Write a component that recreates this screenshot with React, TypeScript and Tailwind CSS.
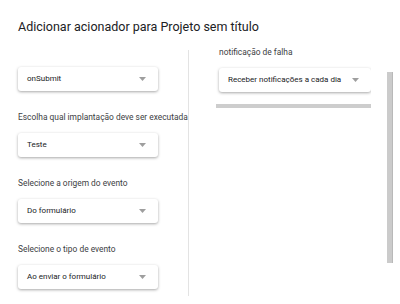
import React from "react";

function Caret() {
  return (
    <svg width="7" height="4" viewBox="0 0 7 4" className="shrink-0">
      <path d="M0 0 L7 0 L3.5 4 Z" fill="#9e9e9e" />
    </svg>
  );
}

function Dropdown({ text, w }: { text: string; w: string }) {
  return (
    <div
      className={`${w} h-[24px] shrink-0 bg-white rounded-[3px] shadow-[0_1px_3px_rgba(0,0,0,0.35)] flex items-center justify-between pl-[9px] pr-[12px]`}
    >
      <span className="text-[8px] text-[#202124] whitespace-nowrap">{text}</span>
      <Caret />
    </div>
  );
}

function Group({ label, value }: { label: string; value: string }) {
  return (
    <div className="flex flex-col">
      <div className="h-[12px] leading-[12px] text-[8.4px] text-[#3c4043] whitespace-nowrap mt-[20px] mb-[10px]">
        {label}
      </div>
      <Dropdown text={value} w="w-[140px]" />
    </div>
  );
}

export default function App() {
  return (
    <div
      className="w-[400px] h-[304px] bg-white relative overflow-hidden"
      style={{ fontFamily: "Roboto, 'Noto Sans', sans-serif" }}
    >
      <div className="pt-[19px] pl-[18px] h-[44px] text-[12.5px] leading-[16px] text-[#202124]">
        Adicionar acionador para Projeto sem título
      </div>
      <div className="flex pl-[18px]">
        <div className="w-[171px] mt-[6px] h-[246px] border-r border-[#e3e3e3] pt-[17px] flex flex-col">
          <Dropdown text="onSubmit" w="w-[140px]" />
          <Group label="Escolha qual implantação deve ser executada" value="Teste" />
          <Group label="Selecione a origem do evento" value="Do formulário" />
          <Group label="Selecione o tipo de evento" value="Ao enviar o formulário" />
        </div>
        <div className="w-[182px] overflow-hidden pt-[2px] pl-[30px] pb-[4px]">
          <div className="h-[12px] leading-[12px] text-[8.4px] text-[#3c4043] whitespace-nowrap mb-[10px]">
            notificação de falha
          </div>
          <Dropdown text="Receber notificações a cada dia" w="w-[152px]" />
          <div className="mt-[12px] -ml-[3px] h-[4px] bg-[#cdcdcd]" />
        </div>
      </div>
      <div className="absolute left-[387px] top-[72px] w-[6px] h-[191px] bg-[#cbcbcb] border-r border-[#b9b9b9]" />
    </div>
  );
}
